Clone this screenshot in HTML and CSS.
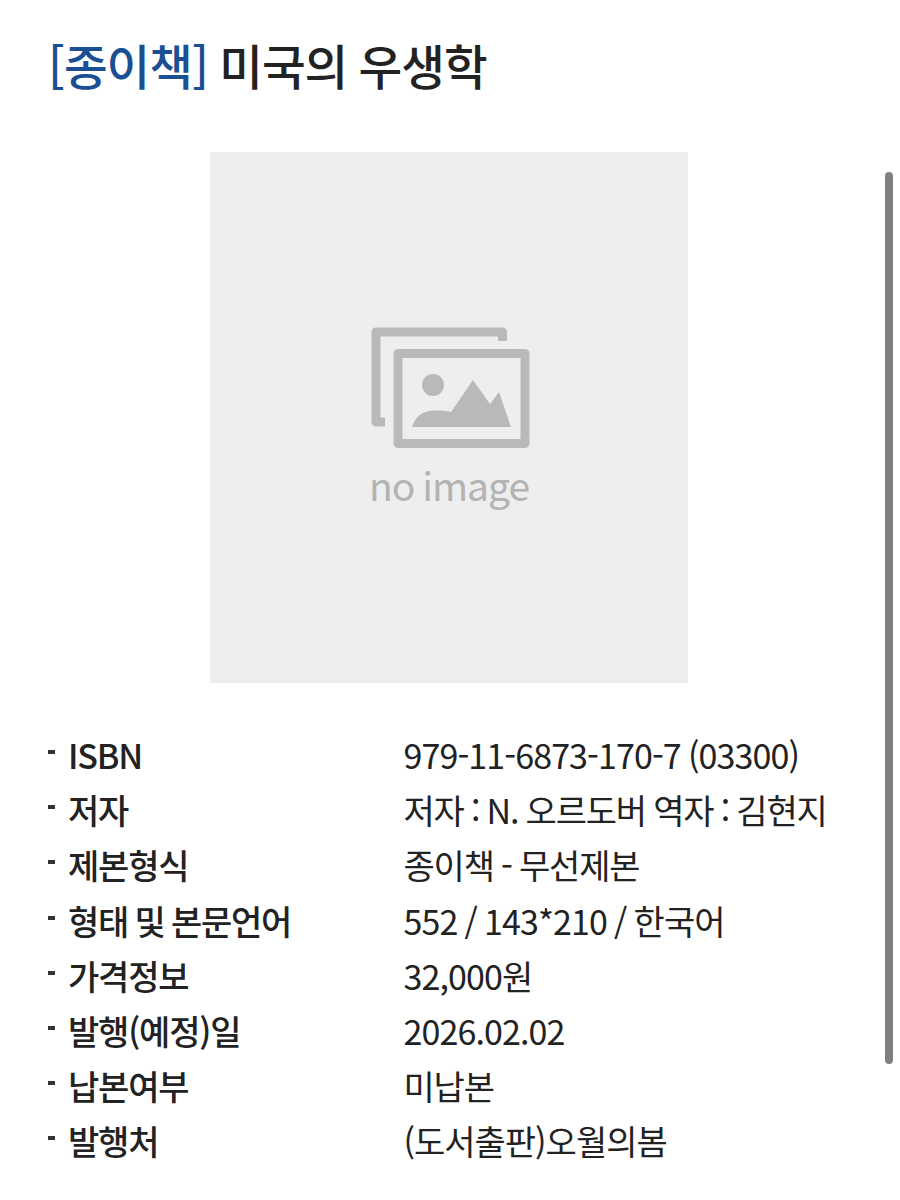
FILE: index.html
```
<!DOCTYPE html>
<html lang="ko">
<head>
    <meta charset="UTF-8">
    <meta name="viewport" content="width=device-width, initial-scale=1.0">
    <title>미국의 우생학</title>
    <link rel="stylesheet" href="styles.css">
</head>
<body>
    <main class="book">
        <h1 class="title"><span class="type">[종이책]</span> 미국의 우생학</h1>

        <div class="cover">
            <svg class="cover-icon" width="162" height="122" viewBox="0 0 162 122">
                <path d="M134.500 14V5H8v90h9" fill="none" stroke="#b9b9b9" stroke-width="9" stroke-linejoin="round"/>
                <rect x="30" y="26.500" width="127" height="90" fill="none" stroke="#b9b9b9" stroke-width="9" stroke-linejoin="round"/>
                <circle cx="65" cy="58" r="11" fill="#b9b9b9"/>
                <path d="M44 100c3-10 10-16 21-16.500 7-.2 12 .2 18 1.500l22-32 17 24 9-12 12 35z" fill="#b9b9b9"/>
            </svg>
            <span class="cover-text">no image</span>
        </div>

        <dl class="info">
            <dt>ISBN</dt><dd class="number">979-11-6873-170-7 (03300)</dd>
            <dt>저자</dt><dd>저자 : N. 오르도버 역자 : 김현지</dd>
            <dt>제본형식</dt><dd>종이책 - 무선제본</dd>
            <dt>형태 및 본문언어</dt><dd class="number">552 / 143*210 / 한국어</dd>
            <dt>가격정보</dt><dd class="number">32,000원</dd>
            <dt>발행(예정)일</dt><dd class="number">2026.02.02</dd>
            <dt>납본여부</dt><dd>미납본</dd>
            <dt>발행처</dt><dd class="publisher">(도서출판)오월의봄</dd>
        </dl>
    </main>
    <div class="scrollbar"></div>
</body>
</html>
```
FILE: styles.css
```
* {
    box-sizing: border-box;
}
body {
    margin: 0;
    height: 1200px;
    overflow: hidden;
    background: #fff;
    color: #222;
    font-family: "Noto Sans CJK KR", sans-serif;
}
.book {
    padding: 31px 48px 0;
}
.title {
    margin: 0;
    height: 121px;
    font-size: 47.5px;
    font-weight: 500;
    line-height: 68px;
    letter-spacing: -1px;
    word-spacing: -1px;
    white-space: nowrap;
}
.type {
    color: #1b4f93;
}
.cover {
    display: flex;
    flex-direction: column;
    align-items: center;
    width: 478px;
    height: 531px;
    margin-left: 162px;
    padding-top: 175px;
    background: #eee;
}
.cover-icon {
    flex: none;
}
.cover-text {
    margin-top: 9px;
    color: #b3b3b3;
    font-size: 39px;
    line-height: 52px;
    letter-spacing: -1px;
    word-spacing: -2px;
}
.info {
    display: grid;
    grid-template-columns: 355.5px 1fr;
    grid-auto-rows: 55.2px;
    margin: 44px 0 0;
    font-size: 34px;
    line-height: 55px;
    letter-spacing: -1.2px;
    word-spacing: -1px;
    white-space: nowrap;
}
dt {
    display: flex;
    font-weight: 500;
    word-spacing: -2px;
}
dt::before {
    content: "";
    width: 7px;
    height: 4px;
    margin: 23px 13px 0 0;
    background: #333;
}
dd {
    margin: 0;
}
.number {
    letter-spacing: -0.9px;
    word-spacing: -1.5px;
}
.publisher {
    letter-spacing: -1px;
}
.scrollbar {
    position: absolute;
    top: 172px;
    left: 885px;
    width: 8px;
    height: 892px;
    border-radius: 4px;
    background: #808080;
}
```
